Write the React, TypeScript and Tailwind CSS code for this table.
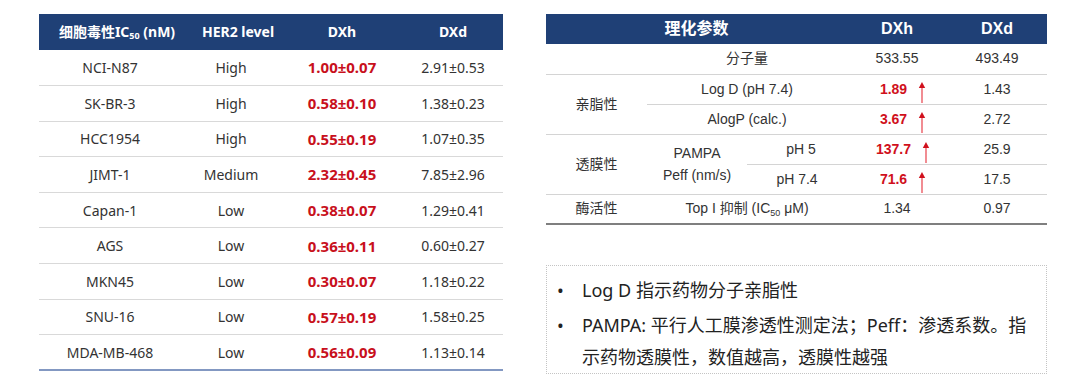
const cyto = [
  { line: "NCI-N87", her2: "High", dxh: "1.00±0.07", dxd: "2.91±0.53" },
  { line: "SK-BR-3", her2: "High", dxh: "0.58±0.10", dxd: "1.38±0.23" },
  { line: "HCC1954", her2: "High", dxh: "0.55±0.19", dxd: "1.07±0.35" },
  { line: "JIMT-1", her2: "Medium", dxh: "2.32±0.45", dxd: "7.85±2.96" },
  { line: "Capan-1", her2: "Low", dxh: "0.38±0.07", dxd: "1.29±0.41" },
  { line: "AGS", her2: "Low", dxh: "0.36±0.11", dxd: "0.60±0.27" },
  { line: "MKN45", her2: "Low", dxh: "0.30±0.07", dxd: "1.18±0.22" },
  { line: "SNU-16", her2: "Low", dxh: "0.57±0.19", dxd: "1.58±0.25" },
  { line: "MDA-MB-468", her2: "Low", dxh: "0.56±0.09", dxd: "1.13±0.14" },
]

function UpArrow() {
  return (
    <svg width="8" height="21" viewBox="0 0 8 21" className="ml-[11px] mt-[6px] shrink-0">
      <line x1="4" y1="5" x2="4" y2="21" stroke="#e8404a" strokeWidth="1.2" />
      <polygon points="4,0 7.2,6 0.8,6" fill="#d0101c" />
    </svg>
  )
}

function Up({ value }: { value: string }) {
  return (
    <div className="flex items-center justify-center pl-[12px]">
      <span className="font-bold text-[#d0101c]">{value}</span>
      <UpArrow />
    </div>
  )
}

function CytoTable() {
  return (
    <table className="w-[464px] table-fixed border-collapse text-[14px] text-[#333] font-['Noto_Sans','Noto_Sans_CJK_SC',sans-serif]">
      <colgroup>
        <col className="w-[142px]" />
        <col className="w-[100px]" />
        <col className="w-[122px]" />
        <col className="w-[100px]" />
      </colgroup>
      <thead>
        <tr className="h-[36px] bg-[#1f4076] text-white font-bold leading-[18px]">
          <th className="pl-[14px] whitespace-nowrap">
            细胞毒性IC<sub className="text-[9px] leading-none">50</sub> (nM)
          </th>
          <th className="pl-[14px] whitespace-nowrap">HER2 level</th>
          <th>DXh</th>
          <th>DXd</th>
        </tr>
      </thead>
      <tbody>
        {cyto.map((r, i) => (
          <tr
            key={r.line}
            className={
              i === cyto.length - 1
                ? "h-[35.6px] border-b-2 border-[#8398c2]"
                : "h-[35.6px] border-b border-[#d9d9d9]"
            }
          >
            <td className="text-center">{r.line}</td>
            <td className="text-center">{r.her2}</td>
            <td className="text-center font-bold text-[#c8101c] text-[15px]">{r.dxh}</td>
            <td className="text-center">{r.dxd}</td>
          </tr>
        ))}
      </tbody>
    </table>
  )
}

function PropTable() {
  const line = "border-b border-[#d4d4d4]"
  return (
    <table className="w-[501px] table-fixed border-collapse text-[14px] text-[#333] font-['Liberation_Sans','Noto_Sans_CJK_SC',sans-serif]">
      <colgroup>
        <col className="w-[101px]" />
        <col className="w-[100px]" />
        <col className="w-[100px]" />
        <col className="w-[100px]" />
        <col className="w-[100px]" />
      </colgroup>
      <thead>
        <tr className="h-[30px] bg-[#1f4076] text-white text-[16px] font-bold">
          <th colSpan={3}>理化参数</th>
          <th>DXh</th>
          <th>DXd</th>
        </tr>
      </thead>
      <tbody className="text-center">
        <tr className="h-[30px]">
          <td className={line}></td>
          <td colSpan={2} className={line}>分子量</td>
          <td className={line}>533.55</td>
          <td className={line}>493.49</td>
        </tr>
        <tr className="h-[30px]">
          <td rowSpan={2} className={line}>亲脂性</td>
          <td colSpan={2} className={line}>Log D (pH 7.4)</td>
          <td className={line}><Up value="1.89" /></td>
          <td className={line}>1.43</td>
        </tr>
        <tr className="h-[30px]">
          <td colSpan={2} className={line}>AlogP (calc.)</td>
          <td className={line}><Up value="3.67" /></td>
          <td className={line}>2.72</td>
        </tr>
        <tr className="h-[30px]">
          <td rowSpan={2} className={line}>透膜性</td>
          <td rowSpan={2} className={line + " leading-[22px]"}>
            PAMPA
            <br />
            Peff (nm/s)
          </td>
          <td className={line + " pl-[8px]"}>pH 5</td>
          <td className={line}><Up value="137.7" /></td>
          <td className={line}>25.9</td>
        </tr>
        <tr className="h-[30px]">
          <td className={line}>pH 7.4</td>
          <td className={line}><Up value="71.6" /></td>
          <td className={line}>17.5</td>
        </tr>
        <tr className="h-[30px] border-b-2 border-[#7f7f7f]">
          <td>酶活性</td>
          <td colSpan={2} className="whitespace-nowrap">
            Top I 抑制 (IC<sub className="text-[9px]">50</sub> μM)
          </td>
          <td>1.34</td>
          <td>0.97</td>
        </tr>
      </tbody>
    </table>
  )
}

export default function App() {
  return (
    <div className="w-[1080px] h-[387px] bg-white flex items-start gap-[43px] pl-[39px] pt-[14px]">
      <CytoTable />
      <div className="flex flex-col gap-[40px]">
        <PropTable />
        <div className="w-[501px] border border-dotted border-[#c4c4c4] pt-[8px] pl-[10px] text-[18px] leading-[32px] text-[#222] font-['Noto_Sans','Noto_Sans_CJK_SC',sans-serif]">
          <ul className="flex flex-col gap-[3px]">
            <li className="flex">
              <span className="w-[25px] shrink-0">•</span>
              <span>Log D 指示药物分子亲脂性</span>
            </li>
            <li className="flex">
              <span className="w-[25px] shrink-0">•</span>
              <span>
                PAMPA: 平行人工膜渗透性测定法；Peff：渗透系数。指
                <br />
                示药物透膜性，数值越高，透膜性越强
              </span>
            </li>
          </ul>
        </div>
      </div>
    </div>
  )
}
